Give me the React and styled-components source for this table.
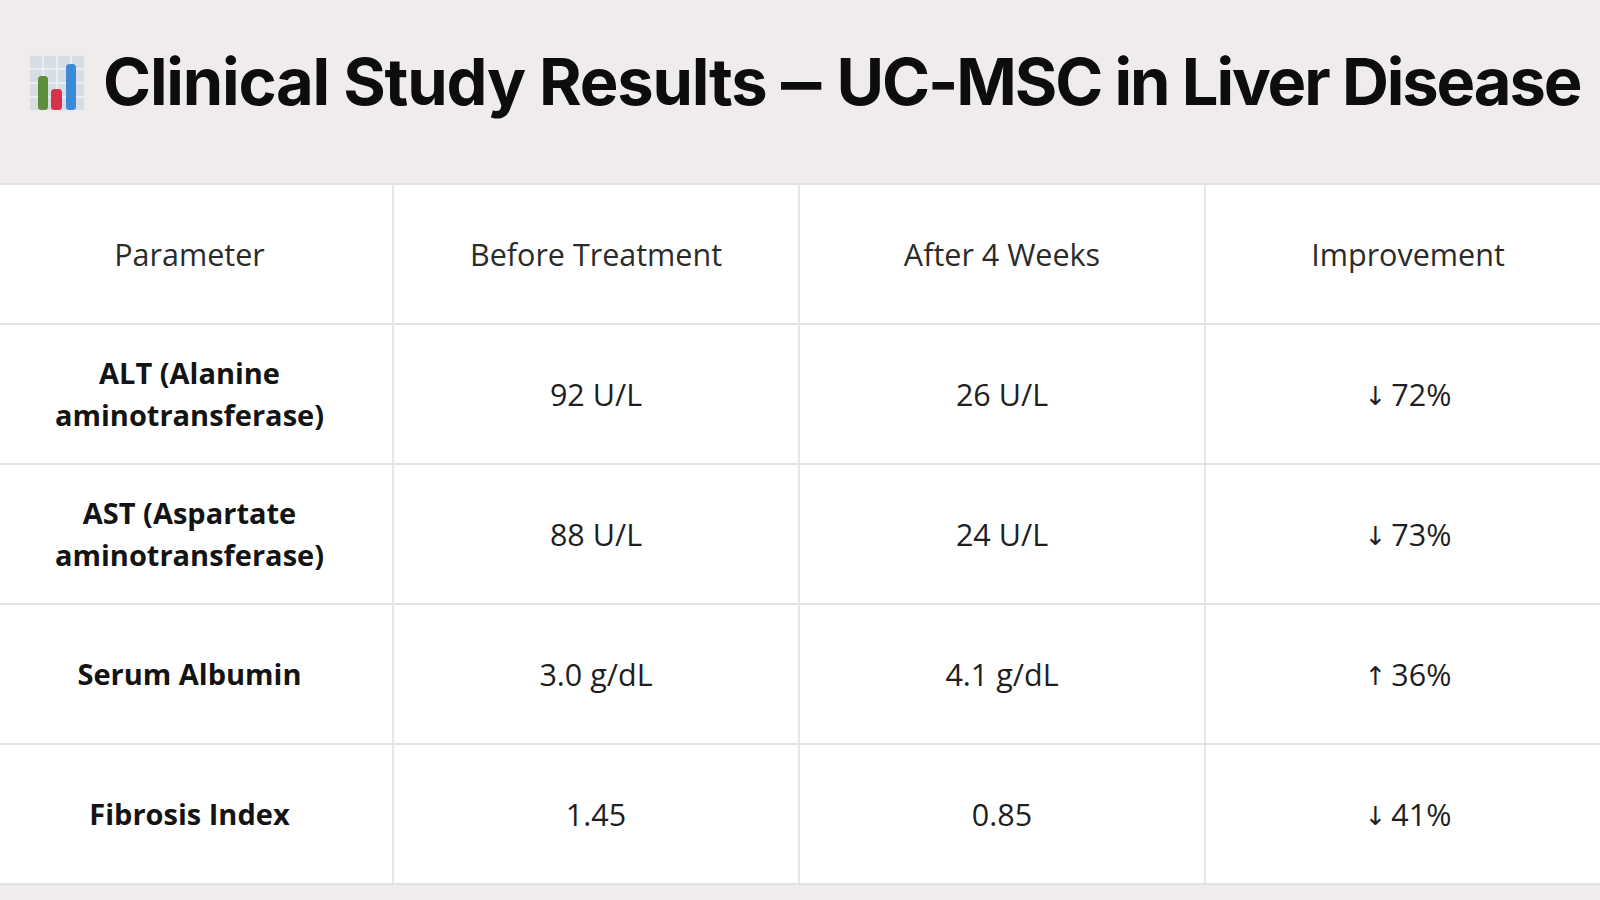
import React from 'react'
import styled, { createGlobalStyle } from 'styled-components'

const GlobalStyle = createGlobalStyle`
  html, body {
    margin: 0;
    padding: 0;
    background: #efeceb;
  }
  body {
    width: 1600px;
    height: 900px;
    overflow: hidden;
  }
`

const rows = [
  { param: ['ALT (Alanine', 'aminotransferase)'], before: '92 U/L', after: '26 U/L', dir: 'down', change: '72%' },
  { param: ['AST (Aspartate', 'aminotransferase)'], before: '88 U/L', after: '24 U/L', dir: 'down', change: '73%' },
  { param: ['Serum Albumin'], before: '3.0 g/dL', after: '4.1 g/dL', dir: 'up', change: '36%' },
  { param: ['Fibrosis Index'], before: '1.45', after: '0.85', dir: 'down', change: '41%' },
]

const ChartIcon = () => (
  <svg width="56" height="56" viewBox="0 0 56 56">
    <rect x="0" y="0" width="56" height="56" fill="#e9edf1" />
    {[0, 1, 2, 3].map((i) =>
      [0, 1, 2, 3].map((j) => (
        <rect key={i + '-' + j} x={1 + i * 14} y={1 + j * 14} width="12" height="12" fill="#d6dde5" />
      ))
    )}
    <rect x="9" y="21" width="10" height="34" rx="3.5" fill="#5b8f3a" />
    <rect x="22" y="34" width="11" height="21" rx="3.5" fill="#d6334a" />
    <rect x="37" y="9" width="10" height="46" rx="3.5" fill="#3a8ad8" />
  </svg>
)

const Page = () => {
  return (
    <Wrapper>
      <GlobalStyle />
      <Header>
        <IconBox>
          <ChartIcon />
        </IconBox>
        <Title>
          Clinical Study Results <Dash>—</Dash> <Tight>UC-MSC in Liver Disease</Tight>
        </Title>
      </Header>
      <Table>
        <colgroup>
          <col style={{ width: 406 }} />
          <col style={{ width: 406 }} />
          <col style={{ width: 406 }} />
          <col />
        </colgroup>
        <thead>
          <tr>
            <HeadCell>Parameter</HeadCell>
            <HeadCell>Before Treatment</HeadCell>
            <HeadCell>After 4 Weeks</HeadCell>
            <HeadCell>Improvement</HeadCell>
          </tr>
        </thead>
        <tbody>
          {rows.map((row) => (
            <tr key={row.param.join(' ')}>
              <ParamCell>
                {row.param.map((line, i) => (
                  <span key={i}>
                    {line}
                    {i < row.param.length - 1 && <br />}
                  </span>
                ))}
              </ParamCell>
              <Cell>{row.before}</Cell>
              <Cell>{row.after}</Cell>
              <Cell>
                <Arrow>{row.dir === 'down' ? '↓' : '↑'}</Arrow>
                {row.change}
              </Cell>
            </tr>
          ))}
        </tbody>
      </Table>
    </Wrapper>
  )
}

export default Page

const Wrapper = styled.main`
  width: 1600px;
  height: 900px;
  background: #efeceb;
  display: flex;
  flex-direction: column;
  overflow: hidden;
`

const Header = styled.header`
  height: 183px;
  flex-shrink: 0;
  display: flex;
  align-items: center;
  gap: 18px;
  padding: 0 0 20px 29px;
  box-sizing: border-box;
`

const IconBox = styled.div`
  width: 56px;
  height: 56px;
  display: flex;
  margin-top: 2px;
`

const Title = styled.h1`
  margin: 0;
  font-family: Inter, 'Liberation Sans', sans-serif;
  font-weight: 700;
  font-size: 65px;
  letter-spacing: -1.2px;
  color: #0d0d0d;
  white-space: nowrap;
`

const Dash = styled.span`
  display: inline-block;
  transform: scaleX(0.62);
  margin: 0 -10px 0 -12px;
`

const Tight = styled.span`
  letter-spacing: -2.1px;
`

const Table = styled.table`
  width: 1623px;
  margin-left: -13px;
  flex-shrink: 0;
  border-collapse: collapse;
  table-layout: fixed;
  background: #ffffff;
  border-top: 2px solid #e2e2e2;

  tr {
    height: 140px;
  }
  td,
  th {
    border-right: 2px solid #e6e6e6;
    border-bottom: 2px solid #e2e2e2;
    text-align: center;
    vertical-align: middle;
    padding: 0 20px;
    font-family: 'Open Sans', 'DejaVu Sans', sans-serif;
    font-size: 30.5px;
    color: #1f1f1f;
  }
  td:last-child,
  th:last-child {
    border-right: none;
  }
`

const HeadCell = styled.th`
  font-weight: 400;
  color: #2b2b2b !important;
`

const ParamCell = styled.td`
  font-weight: 700;
  font-size: 29px !important;
  line-height: 42px;
  color: #141414 !important;
`

const Cell = styled.td`
  font-weight: 400;
`

const Arrow = styled.span`
  font-family: 'DejaVu Sans', sans-serif;
  font-size: 26px;
  margin-right: 5px;
  position: relative;
  top: -1px;
`
